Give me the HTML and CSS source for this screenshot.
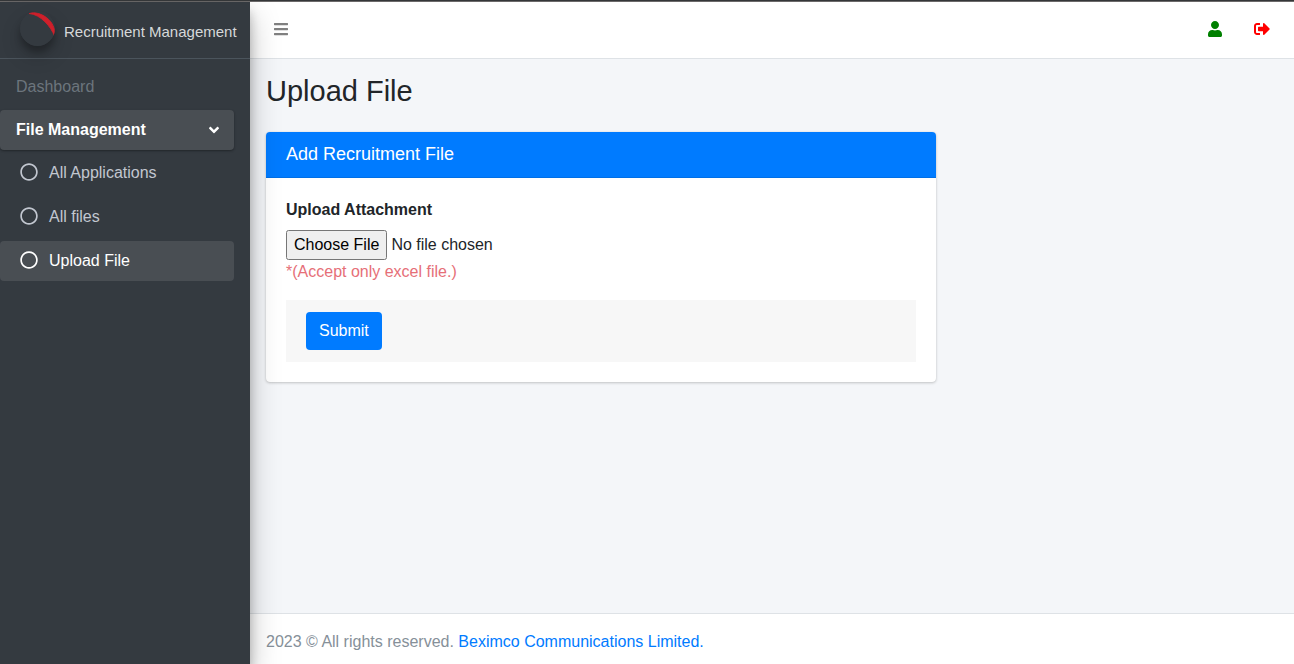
FILE: index.html
```html
<!DOCTYPE html>
<html lang="en">
<head>
<meta charset="utf-8">
<meta name="viewport" content="width=device-width, initial-scale=1">
<title>Upload File</title>
<link rel="stylesheet" href="styles.css">
</head>
<body>
<div class="wrapper">
  <aside class="sidebar">
    <a class="brand" href="#">
      <svg class="brand-logo" viewBox="0 0 35 35" aria-hidden="true">
        <circle cx="17.500" cy="17.500" r="17.500" fill="#343a40"/>
        <path d="M9 2.500C20-1 37 10 34.500 25C31 16 21 3.500 9 2.500Z" fill="#cf202b" stroke="#cf202b" stroke-width="0.800"/>
      </svg>
      <span>Recruitment Management</span>
    </a>
    <nav>
      <ul class="menu">
        <li><a class="menu-link menu-muted" href="#">Dashboard</a></li>
        <li>
          <a class="menu-link menu-open" href="#">File Management
            <svg class="chevron" viewBox="0 0 320 512" aria-hidden="true"><path fill="currentColor" d="M143 352.300L7 216.300c-9.400-9.400-9.400-24.600 0-33.900l22.600-22.600c9.400-9.400 24.600-9.400 33.900 0l96.400 96.400 96.400-96.400c9.400-9.400 24.600-9.400 33.900 0l22.600 22.600c9.400 9.400 9.400 24.600 0 33.900l-136 136c-9.200 9.400-24.400 9.400-33.800 0z"/></svg>
          </a>
          <ul class="menu submenu">
            <li><a class="menu-link" href="#"><svg class="dot" viewBox="0 0 512 512" aria-hidden="true"><path fill="currentColor" d="M256 8C119 8 8 119 8 256s111 248 248 248 248-111 248-248S393 8 256 8zm0 448c-110.500 0-200-89.500-200-200S145.500 56 256 56s200 89.500 200 200-89.500 200-200 200z"/></svg>All Applications</a></li>
            <li><a class="menu-link" href="#"><svg class="dot" viewBox="0 0 512 512" aria-hidden="true"><path fill="currentColor" d="M256 8C119 8 8 119 8 256s111 248 248 248 248-111 248-248S393 8 256 8zm0 448c-110.500 0-200-89.500-200-200S145.500 56 256 56s200 89.500 200 200-89.500 200-200 200z"/></svg>All files</a></li>
            <li><a class="menu-link menu-current" href="#" aria-current="page"><svg class="dot" viewBox="0 0 512 512" aria-hidden="true"><path fill="currentColor" d="M256 8C119 8 8 119 8 256s111 248 248 248 248-111 248-248S393 8 256 8zm0 448c-110.500 0-200-89.500-200-200S145.500 56 256 56s200 89.500 200 200-89.500 200-200 200z"/></svg>Upload File</a></li>
          </ul>
        </li>
      </ul>
    </nav>
  </aside>
  <div class="page">
    <header class="topbar">
      <button class="icon-button toggle" type="button" aria-label="Toggle menu">
        <svg viewBox="0 0 448 512" aria-hidden="true"><path fill="currentColor" d="M16 132h416c8.837 0 16-7.163 16-16V76c0-8.837-7.163-16-16-16H16C7.163 60 0 67.163 0 76v40c0 8.837 7.163 16 16 16zm0 160h416c8.837 0 16-7.163 16-16v-40c0-8.837-7.163-16-16-16H16c-8.837 0-16 7.163-16 16v40c0 8.837 7.163 16 16 16zm0 160h416c8.837 0 16-7.163 16-16v-40c0-8.837-7.163-16-16-16H16c-8.837 0-16 7.163-16 16v40c0 8.837 7.163 16 16 16z"/></svg>
      </button>
      <div class="actions">
        <a class="icon-button profile" href="#" aria-label="Profile">
          <svg viewBox="0 0 448 512" aria-hidden="true"><path fill="currentColor" d="M224 256c70.700 0 128-57.300 128-128S294.700 0 224 0 96 57.300 96 128s57.300 128 128 128zm89.600 32h-16.700c-22.200 10.200-46.900 16-72.900 16s-50.600-5.800-72.900-16h-16.700C60.200 288 0 348.200 0 422.400V464c0 26.500 21.500 48 48 48h352c26.500 0 48-21.500 48-48v-41.600c0-74.200-60.200-134.400-134.400-134.400z"/></svg>
        </a>
        <a class="icon-button logout" href="#" aria-label="Sign out">
          <svg viewBox="0 0 512 512" aria-hidden="true"><path fill="currentColor" d="M497 273L329 441c-15 15-41 4.500-41-17v-96H152c-13.300 0-24-10.700-24-24v-96c0-13.300 10.700-24 24-24h136V88c0-21.400 25.900-32 41-17l168 168c9.300 9.400 9.300 24.600 0 34zM192 436v-40c0-6.600-5.400-12-12-12H96c-17.700 0-32-14.300-32-32V160c0-17.700 14.300-32 32-32h84c6.600 0 12-5.400 12-12V76c0-6.600-5.400-12-12-12H96c-53 0-96 43-96 96v192c0 53 43 96 96 96h84c6.600 0 12-5.400 12-12z"/></svg>
        </a>
      </div>
    </header>
    <main class="content">
      <h1 class="title">Upload File</h1>
      <section class="card">
        <h2 class="card-header">Add Recruitment File</h2>
        <form class="card-body">
          <label class="label" for="attachment">Upload Attachment</label>
          <input class="file" type="file" id="attachment" accept=".xls,.xlsx">
          <p class="hint">*(Accept only excel file.)</p>
          <div class="form-actions">
            <button class="submit" type="submit">Submit</button>
          </div>
        </form>
      </section>
    </main>
    <footer class="footer">2023 © All rights reserved. <a href="#">Beximco Communications Limited.</a></footer>
  </div>
</div>
</body>
</html>
```

FILE: styles.css
```css
*, *::before, *::after { box-sizing: border-box; }

body {
  margin: 0;
  border-top: 1px solid #343638;
  font: 16px/24px "Liberation Sans", Arial, sans-serif;
  color: #212529;
  background: #f4f6f9;
}

a { color: #007bff; text-decoration: none; }

.wrapper {
  display: flex;
  min-height: calc(100vh - 1px);
  border-top: 1px solid #6c6a6a;
}

.sidebar {
  flex: none;
  width: 250px;
  z-index: 1;
  background: #343a40;
  box-shadow: 0 14px 28px rgba(0, 0, 0, .25), 0 10px 10px rgba(0, 0, 0, .22);
}

.brand {
  display: flex;
  align-items: center;
  gap: 9px;
  height: 57px;
  padding: 4px 8px 0 20px;
  border-bottom: 1px solid #4b545c;
  font-size: 15px;
  color: #d6d8d9;
  white-space: nowrap;
}

.brand-logo {
  flex: none;
  width: 35px;
  height: 35px;
  margin-bottom: 8px;
  border-radius: 50%;
  box-shadow: 0 10px 20px rgba(0, 0, 0, .19), 0 6px 6px rgba(0, 0, 0, .23);
}

.menu {
  display: flex;
  flex-direction: column;
  gap: 3px;
  margin: 0;
  padding: 8px 16px 0 0;
  list-style: none;
}

.submenu { gap: 4px; padding: 3px 0 0; }

.menu-link {
  display: flex;
  align-items: center;
  height: 40px;
  padding: 0 16px;
  border-radius: 4px;
  color: #c2c7d0;
}

.menu-muted { color: #6c757d; }

.menu-open {
  justify-content: space-between;
  padding-right: 15px;
  background: #494e53;
  color: #fff;
  font-weight: 700;
  box-shadow: 0 1px 3px rgba(0, 0, 0, .12), 0 1px 2px rgba(0, 0, 0, .24);
}

.menu-current { background: #494e53; color: #fff; }

.chevron { width: 10px; height: 16px; }

.dot {
  width: 18px;
  height: 18px;
  margin: 0 11px 2px 4px;
}

.page {
  display: flex;
  flex: 1;
  flex-direction: column;
  min-width: 0;
}

.topbar {
  display: flex;
  align-items: center;
  justify-content: space-between;
  height: 57px;
  padding: 0 8px 2px;
  background: #fff;
  border-bottom: 1px solid #dee2e6;
}

.actions { display: flex; }

.icon-button {
  display: flex;
  align-items: center;
  height: 40px;
  padding: 0 16px;
  border: 0;
  background: none;
}

.icon-button svg { height: 16px; }

.toggle { color: #808080; }
.profile { color: #008000; }
.logout { color: #f00; }

.content { flex: 1; padding: 0 8px; }

.title {
  margin: 0;
  padding: 15px 8px 24px;
  font-size: 29px;
  font-weight: 400;
  line-height: 34px;
}

.card {
  width: calc(66.6667% - 15px);
  margin: 0 8px;
  border-radius: 4px;
  background: #fff;
  box-shadow: 0 0 1px rgba(0, 0, 0, .125), 0 1px 3px rgba(0, 0, 0, .2);
}

.card-header {
  margin: 0;
  padding: 12px 20px;
  border-bottom: 1px solid #006fe6;
  border-radius: 4px 4px 0 0;
  background: #007bff;
  color: #fff;
  font-size: 18px;
  font-weight: 400;
  line-height: 21px;
}

.card-body { padding: 20px; }

.label {
  display: block;
  margin-bottom: 8px;
  font-weight: 700;
}

.file {
  display: block;
  width: 100%;
  font: inherit;
  color: inherit;
}

.file::file-selector-button { height: 30px; }

.hint { margin: 0; color: #e66f78; }

.form-actions {
  margin-top: 16px;
  padding: 12px 20px;
  background: #f7f7f7;
}

.submit {
  display: block;
  height: 38px;
  padding: 0 13px;
  border: 0;
  border-radius: 4px;
  background: #007bff;
  color: #fff;
  font: inherit;
}

.footer {
  padding: 16px 16px 10px;
  border-top: 1px solid #dee2e6;
  background: #fff;
  color: #869099;
}
```
